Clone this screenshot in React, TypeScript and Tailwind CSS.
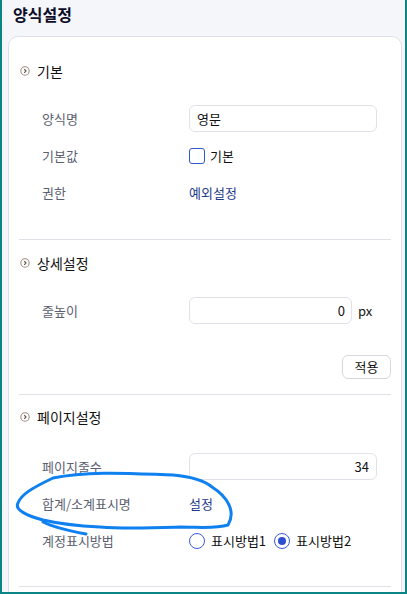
import React from "react";

const font = { fontFamily: '"Noto Sans CJK KR", "Noto Sans", sans-serif' };

/**
 * Small circled chevron used in front of each section title
 */
function SectionIcon() {
  return (
    <svg width="10" height="10" viewBox="0 0 10 10" className="shrink-0">
      <circle cx="5" cy="5" r="4.2" fill="none" stroke="#a08c7e" strokeWidth="1.1" />
      <path d="M4.2 3.2 L6 5 L4.2 6.8" fill="none" stroke="#555" strokeWidth="1.1" />
    </svg>
  );
}

function SectionHeader({ title }: { title: string }) {
  return (
    <div className="flex h-5 items-center gap-[7px] pl-[11px]">
      <SectionIcon />
      <span className="text-[14px] leading-5 text-[#111]">{title}</span>
    </div>
  );
}

function Row({ label, children }: { label: string; children: React.ReactNode }) {
  return (
    <div className="flex h-[37px] items-center pl-[33px]">
      <div className="w-[147px] shrink-0 text-[13px] text-[#5b6070]">{label}</div>
      <div className="flex items-center">{children}</div>
    </div>
  );
}

function Radio({ checked, label }: { checked?: boolean; label: string }) {
  return (
    <label className="flex items-center gap-[6px]">
      <span className="flex h-[16px] w-[16px] items-center justify-center rounded-full border border-[#3d5bd9] bg-white">
        {checked && <span className="h-[8px] w-[8px] rounded-full bg-[#2f4fd0]" />}
      </span>
      <span className="text-[13px] text-[#111]">{label}</span>
    </label>
  );
}

function Divider() {
  return <div className="mx-[10px] h-px bg-[#dfe1e6]" />;
}

export default function App() {
  return (
    <div
      className="relative h-[594px] w-[407px] overflow-hidden border-x-2 border-b-2 border-[#0b8585] bg-[#f4f6f9]"
      style={font}
    >
      {/* Title */}
      <div className="h-[36px] pl-[11px] pt-[2px] text-[16px] font-bold leading-6 text-[#0d0d2a]">
        양식설정
      </div>

      {/* Card */}
      <div className="ml-[6px] mr-[3px] rounded-[10px] border border-[#dde1e7] bg-white">
        {/* 기본 */}
        <div className="pt-[24px] pb-[28px]">
          <SectionHeader title="기본" />
          <div className="mt-[19px]">
            <Row label="양식명">
              <div className="flex h-[27px] w-[188px] items-center rounded-md border border-[#dfe2e8] px-[7px] text-[13px] text-[#111]">
                영문
              </div>
            </Row>
            <Row label="기본값">
              <span className="h-[16px] w-[16px] rounded-[3px] border border-[#3056d3] bg-white" />
              <span className="ml-[5px] text-[13px] text-[#111]">기본</span>
            </Row>
            <Row label="권한">
              <span className="text-[13px] text-[#1e3a8a]">예외설정</span>
            </Row>
          </div>
        </div>
        <Divider />

        {/* 상세설정 */}
        <div className="pt-[13px] pb-[15px]">
          <SectionHeader title="상세설정" />
          <div className="mt-[19px]">
            <Row label="줄높이">
              <div className="flex h-[27px] w-[163px] items-center justify-end rounded-md border border-[#dfe2e8] px-[6px] text-[13px] text-[#111]">
                0
              </div>
              <span className="ml-[6px] text-[13px] text-[#111]">px</span>
            </Row>
          </div>
          <div className="mt-[26px] flex justify-end pr-[10px]">
            <button className="h-[24px] w-[49px] rounded-md border border-[#d5d8de] bg-white text-[13px] text-[#111]">
              적용
            </button>
          </div>
        </div>
        <Divider />

        {/* 페이지설정 */}
        <div className="pt-[12px] pb-[27px]">
          <SectionHeader title="페이지설정" />
          <div className="mt-[21px]">
            <Row label="페이지줄수">
              <div className="flex h-[27px] w-[188px] items-center justify-end rounded-md border border-[#dfe2e8] px-[7px] text-[13px] text-[#111]">
                34
              </div>
            </Row>
            <Row label="합계/소계표시명">
              <span className="text-[13px] text-[#1e3a8a]">설정</span>
            </Row>
            <Row label="계정표시방법">
              <div className="flex items-center gap-[8px]">
                <Radio label="표시방법1" />
                <Radio checked label="표시방법2" />
              </div>
            </Row>
          </div>
        </div>
        <Divider />
        <div className="h-[20px]" />
      </div>

      {/* Hand-drawn annotation */}
      <svg
        className="pointer-events-none absolute left-[-2px] top-0"
        width="407"
        height="594"
        viewBox="0 0 407 594"
      >
        <path
          d="M53 478 C90 470 140 474 173 475 C195 477 205 481 212 487 C228 497 236 512 228 525 C215 529 200 527 180 527 C150 528 125 529 100 527 C80 526 60 524 43 520 C28 516 14 510 18 503 C21 495 30 489 53 478 Z"
          fill="none"
          stroke="#0f80f0"
          strokeWidth="3"
          strokeLinejoin="round"
        />
        <path
          d="M43 522 C55 528 70 531 86 534"
          fill="none"
          stroke="#0f80f0"
          strokeWidth="3"
          strokeLinecap="round"
        />
      </svg>
    </div>
  );
}
